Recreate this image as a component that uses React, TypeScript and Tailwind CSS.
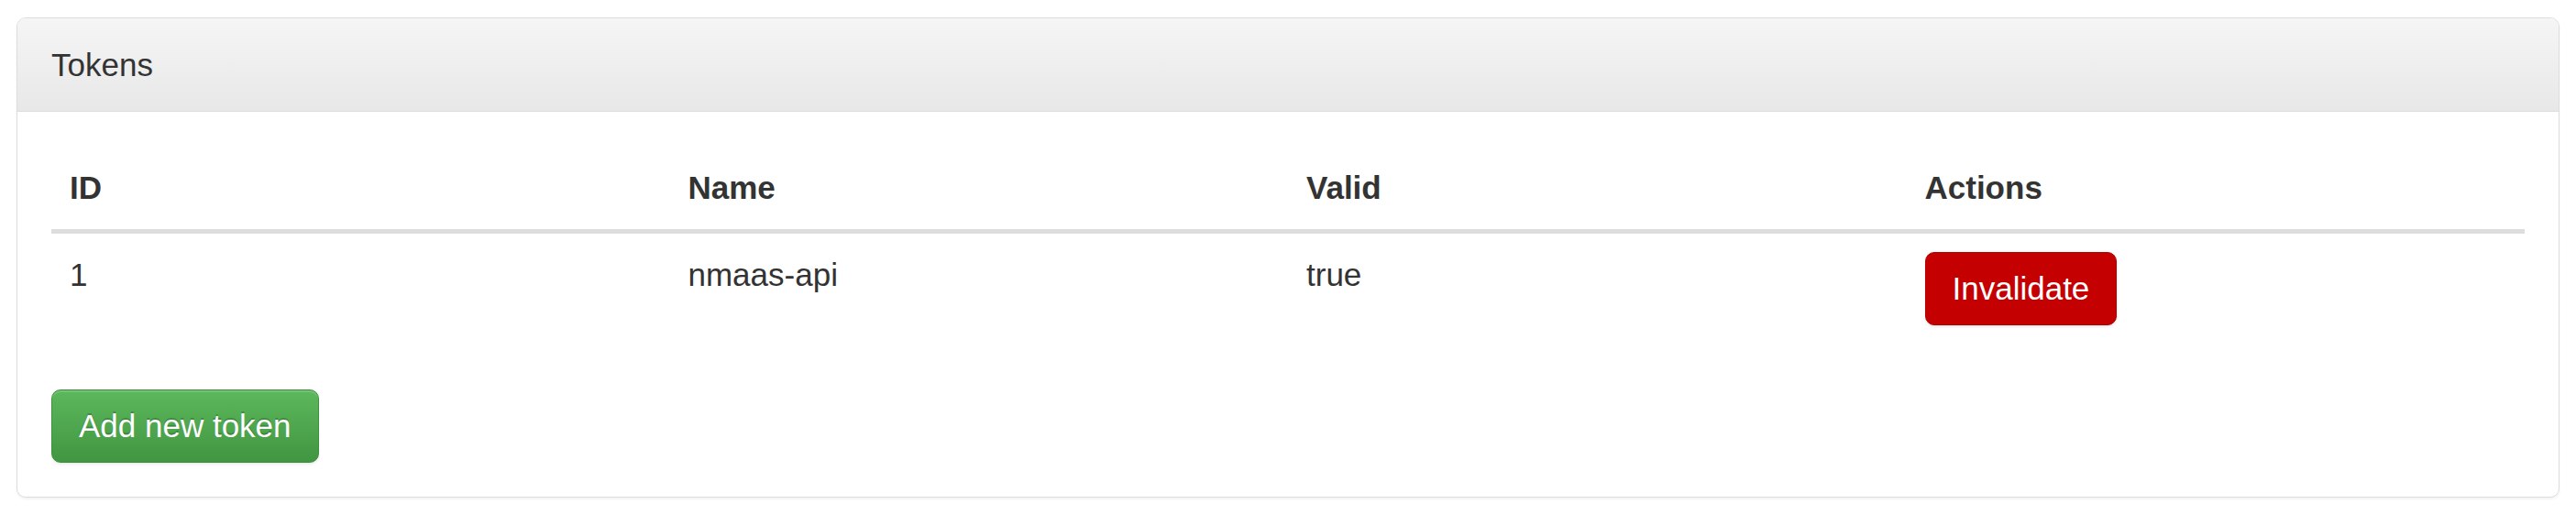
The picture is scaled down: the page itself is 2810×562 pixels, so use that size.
import React from "react";

export default function App() {
  const font = { fontFamily: '"Liberation Sans", Arial, Helvetica, sans-serif' };
  return (
    <div className="w-[2810px] h-[562px] bg-white pt-[19px] px-[18px] text-[#333]" style={font}>
      <div className="border border-[#dddddd] rounded-[10px] bg-white shadow-[0_2px_3px_rgba(0,0,0,0.05)]">
        <div className="h-[102px] flex items-center px-[37px] border-b border-[#dddddd] rounded-t-[9px] bg-gradient-to-b from-[#f5f5f5] to-[#e8e8e8]">
          <span className="text-[35px] leading-[50px] text-[#333]">Tokens</span>
        </div>
        <div className="pt-[38px] pb-[37px] px-[37px]">
          <table className="w-full table-fixed border-collapse mb-[50px]">
            <thead>
              <tr className="border-b-[5px] border-[#dddddd]">
                <th className="text-left font-bold text-[35px] leading-[50px] p-[20px]">ID</th>
                <th className="text-left font-bold text-[35px] leading-[50px] p-[20px]">Name</th>
                <th className="text-left font-bold text-[35px] leading-[50px] p-[20px]">Valid</th>
                <th className="text-left font-bold text-[35px] leading-[50px] p-[20px]">Actions</th>
              </tr>
            </thead>
            <tbody>
              <tr>
                <td className="align-top text-[35px] leading-[50px] p-[20px]">1</td>
                <td className="align-top text-[35px] leading-[50px] p-[20px]">nmaas-api</td>
                <td className="align-top text-[35px] leading-[50px] p-[20px]">true</td>
                <td className="align-top text-[35px] leading-[50px] p-[20px]">
                  <button className="h-[80px] px-[29px] rounded-[10px] border border-[#b50000] bg-[#c50000] text-white text-[35px] leading-[50px] shadow-[0_2px_3px_rgba(0,0,0,0.08)]">
                    Invalidate
                  </button>
                </td>
              </tr>
            </tbody>
          </table>
          <button className="h-[80px] px-[29px] rounded-[10px] border border-[#3e8f3e] bg-gradient-to-b from-[#5cb85c] to-[#419641] text-white text-[35px] leading-[50px] shadow-[inset_0_2px_0_rgba(255,255,255,0.15),0_2px_3px_rgba(0,0,0,0.075)] [text-shadow:0_-2px_0_rgba(0,0,0,0.2)]">
            Add new token
          </button>
        </div>
      </div>
    </div>
  );
}
